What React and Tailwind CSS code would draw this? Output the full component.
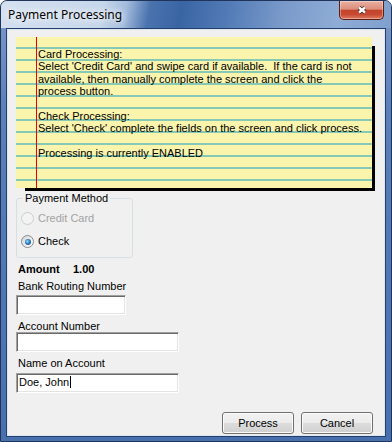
import React from "react";

const noteLines = [
  "Card Processing:",
  "Select 'Credit Card' and swipe card if available.  If the card is not",
  "available, then manually complete the screen and click the",
  "process button.",
  "",
  "Check Processing:",
  "Select 'Check' complete the fields on the screen and click process.",
  "",
  "Processing is currently ENABLED",
];

const Radio = ({ label, checked, disabled }) => (
  <div className="flex items-center gap-[4px] h-[13px]">
    <span
      className={
        disabled
          ? "flex items-center justify-center w-[13px] h-[13px] rounded-full border border-[#cdcdcd] bg-[#f3f3f3]"
          : "flex items-center justify-center w-[13px] h-[13px] rounded-full border border-[#8b8b8b] bg-[linear-gradient(135deg,#d6d6d6,#ffffff)]"
      }
    >
      {checked && (
        <span className="w-[6px] h-[6px] rounded-full bg-[radial-gradient(circle_at_40%_40%,#9fdcff_0%,#2d80c4_45%,#0b3e78_100%)]" />
      )}
    </span>
    <span className={disabled ? "text-[#a3a3a3]" : "text-black"}>{label}</span>
  </div>
);

const TextBox = ({ className, value }) => (
  <div
    className={`${className} h-[20px] shrink-0 bg-white border border-[#a0a0a0] border-b-white border-r-white shadow-[inset_1px_1px_0_#696969,inset_-1px_-1px_0_#e3e3e3] pl-[2px] pt-[2px] leading-[13px] flex items-start`}
  >
    {value && (
      <>
        <span>{value}</span>
        <span className="ml-[1px] w-[1px] h-[12px] bg-black" />
      </>
    )}
  </div>
);

const WinButton = ({ children }) => (
  <button className="w-[72px] h-[22px] rounded-[3px] border border-[#707070] bg-[linear-gradient(to_bottom,#f2f2f2_0%,#ebebeb_50%,#dddddd_50%,#cfcfcf_100%)] shadow-[inset_0_0_0_1px_#fbfbfb] text-[11px] leading-[13px] text-black">
    {children}
  </button>
);

export default function App() {
  return (
    <div className="w-[392px] h-[442px] flex flex-col rounded-t-[7px] border border-[#1f3458] bg-[linear-gradient(to_bottom,#7d9bcb_0%,#5a7fb9_25%,#4870ad_100%)] font-['Liberation_Sans',Arial,sans-serif] text-[11px] text-black overflow-hidden">
      {/* Title bar */}
      <div className="h-[27px] shrink-0 flex items-start justify-between bg-[linear-gradient(100deg,#d4e0f0_0%,#c7d7eb_26%,#a3bbdc_32%,#4a73ae_38%,#3a65a4_46%,#527bb6_58%,#7a9aca_72%,#8eacd5_86%,#7f9fcd_100%)]">
        <div className="mt-[6px] ml-[7px] font-['Noto_Sans',sans-serif] text-[12px] leading-[16px] [text-shadow:0_0_6px_#ffffff,0_0_10px_#ffffff]">
          Payment Processing
        </div>
        <div className="mr-[7px] w-[45px] h-[19px] rounded-b-[5px] border border-t-0 border-[#5c1e14] bg-[linear-gradient(to_bottom,#eab0a2_0%,#dc8f7c_45%,#c4432b_52%,#c64a33_75%,#e07a5f_100%)] shadow-[inset_0_0_0_1px_rgba(255,255,255,0.35)] flex items-center justify-center">
          <svg width="12" height="10" viewBox="0 0 12 10">
            <path d="M3 2.5 L9 7.5 M9 2.5 L3 7.5" stroke="#3f2a26" strokeWidth="4.2" />
            <path d="M3 2.5 L9 7.5 M9 2.5 L3 7.5" stroke="#ffffff" strokeWidth="2.4" />
          </svg>
        </div>
      </div>

      {/* Client area */}
      <div className="mx-[5px] mb-[4px] flex-1 border border-[#243f6e]">
        <div className="h-full border border-[#dde5ef] bg-[#f0f0f0] flex flex-col">
          {/* Note */}
          <div className="ml-[8px] mt-[7px] w-[356px] h-[151px] shrink-0 flex bg-[#faf4ad] bg-[repeating-linear-gradient(to_bottom,transparent_0px,transparent_10px,#86c9b4_10px,#86c9b4_12px)] shadow-[6px_6px_0_-3px_#000000]">
            <div className="w-[21px] shrink-0 border-r border-[#e8000b]" />
            <div className="pl-[1px] pt-[11px] whitespace-pre leading-[12.35px]">
              {noteLines.map((line, i) => (
                <div key={i} className="h-[12.35px]">
                  {line}
                </div>
              ))}
            </div>
          </div>

          {/* Payment method */}
          <fieldset className="ml-[8px] mt-[4px] w-[117px] shrink-0 border border-[#d5dfe5] rounded-[3px]">
            <legend className="ml-[6px] px-[2px] leading-[13px]">Payment Method</legend>
            <div className="pl-[4px] pt-[7px] pb-[9px] flex flex-col gap-[10px]">
              <Radio label="Credit Card" disabled />
              <Radio label="Check" checked />
            </div>
          </fieldset>

          <div className="ml-[10px] mt-[5px] leading-[12px] font-bold flex">
            <span className="w-[55px]">Amount</span>
            <span>1.00</span>
          </div>
          <div className="ml-[10px] mt-[5px] leading-[12px]">Bank Routing Number</div>
          <TextBox className="ml-[8px] mt-[3px] w-[110px]" />
          <div className="ml-[10px] mt-[5px] leading-[12px]">Account Number</div>
          <TextBox className="ml-[8px] w-[163px]" />
          <div className="ml-[10px] mt-[5px] leading-[12px]">Name on Account</div>
          <TextBox className="ml-[8px] mt-[4px] w-[163px]" value="Doe, John" />

          <div className="mt-[19px] flex justify-end gap-[7px] pr-[11px]">
            <WinButton>Process</WinButton>
            <WinButton>Cancel</WinButton>
          </div>
        </div>
      </div>
    </div>
  );
}
